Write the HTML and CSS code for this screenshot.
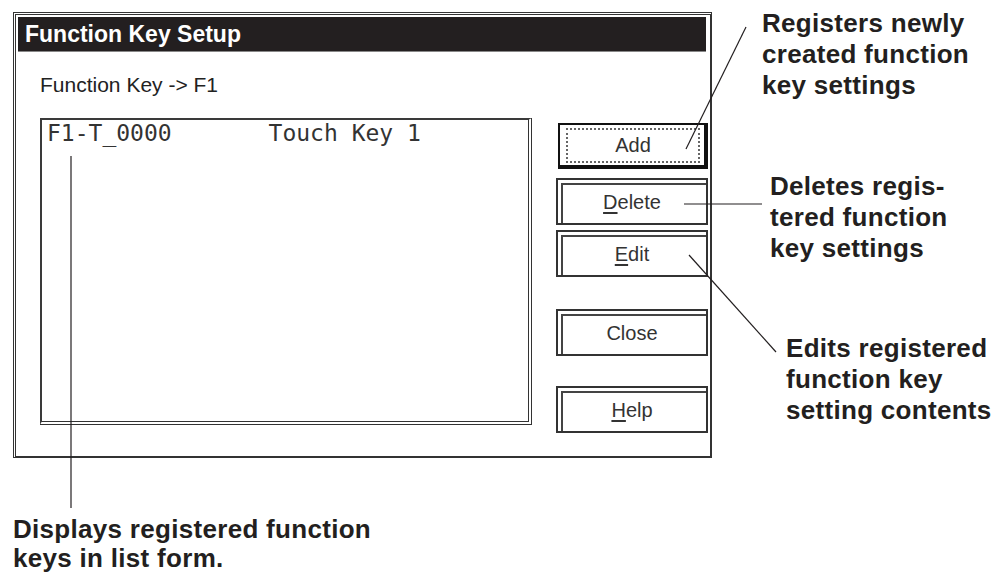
FILE: index.html
```html
<!DOCTYPE html>
<html>
<head lang="en">
    <meta charset="UTF-8">
    <title>Function Key Setup</title>
    <link rel="stylesheet" href="styles.css">
</head>
<body>
<div id="figure">
    <div id="top">
        <div class="dialog">
            <div class="titlebar">Function Key Setup</div>
            <div class="dialog-body">
                <div class="list-pane">
                    <div class="label">Function Key -&gt; F1</div>
                    <div class="list">
                        <div class="row">F1-T_0000       Touch Key 1</div>
                    </div>
                </div>
                <div class="buttons">
                    <div class="btn btn-default"><span class="focus">Add</span></div>
                    <div class="btn btn-delete"><u>D</u>elete</div>
                    <div class="btn btn-edit"><u>E</u>dit</div>
                    <div class="btn btn-close">Close</div>
                    <div class="btn btn-help"><u>H</u>elp</div>
                </div>
            </div>
        </div>
        <div class="notes">
            <p class="note note-add">Registers newly<br>created function<br>key settings</p>
            <p class="note note-delete">Deletes regis-<br>tered function<br>key settings</p>
            <p class="note note-edit">Edits registered<br>function key<br>setting contents</p>
        </div>
    </div>
    <p class="note note-list">Displays registered function<br>keys in list form.</p>

    <svg class="leaders" width="1002" height="573" viewBox="0 0 1002 573">
        <line x1="686" y1="149" x2="746" y2="27"/>
        <line x1="684" y1="204" x2="762" y2="204"/>
        <line x1="689" y1="255" x2="776" y2="352"/>
        <line x1="71" y1="156" x2="71" y2="508"/>
    </svg>
</div>
</body>
</html>
```

FILE: styles.css
```css
*{
    margin: 0;
    padding: 0;
    box-sizing: border-box;
}
body{
    background: #fff;
    font-family: "Liberation Sans", Arial, sans-serif;
    color: #231f20;
}
#figure{
    position: relative;
    width: 1002px;
    height: 573px;
}
#top{
    display: flex;
}

/* dialog */
.dialog{
    width: 699px;
    height: 446px;
    margin: 12px 0 0 13px;
    border-style: double solid solid double;
    border-width: 3px 2px 2px 3px;
    border-color: #333;
}
.titlebar{
    margin: 2px 4px 0 2px;
    height: 35px;
    line-height: 35px;
    padding-left: 7px;
    background: #231f20;
    color: #fff;
    font-weight: bold;
    font-size: 23px;
    border-bottom: 1px solid #888;
}
.dialog-body{
    display: flex;
    padding: 21px 2px 0 24px;
}
.list-pane{
    width: 492px;
}
.label{
    font-size: 21px;
    line-height: 24px;
    color: #222;
}
.list{
    margin-top: 21px;
    height: 307px;
    border-top: 2px solid #3a3a3a;
    border-left: 2px solid #3a3a3a;
    border-right: 4px double #333;
    border-bottom: 4px double #333;
    padding-left: 5px;
}
.list .row{
    font-family: "DejaVu Sans Mono", "Liberation Mono", monospace;
    font-size: 23px;
    line-height: 27px;
    white-space: pre;
    color: #333;
}

/* buttons */
.buttons{
    width: 152px;
    margin-left: 24px;
    margin-top: 50px;
    display: flex;
    flex-direction: column;
}
.btn{
    height: 47px;
    border: 2px solid #333;
    box-shadow: inset 3px 3px 0 #fff, inset 5px 5px 0 #444;
    display: flex;
    align-items: center;
    justify-content: center;
    font-size: 20px;
    color: #333;
    padding-top: 2px;
}
.btn u{
    text-underline-offset: 3px;
}
.btn-default{
    height: 46px;
    margin-left: 2px;
    border-width: 2px 4px 4px 2px;
    border-color: #111;
    box-shadow: none;
    padding: 3px 4px 2px 6px;
}
.btn-default .focus{
    flex: 1;
    align-self: stretch;
    display: flex;
    align-items: center;
    justify-content: center;
    border: 2px dotted #666;
}
.btn-delete{ margin-top: 9px; }
.btn-edit{ margin-top: 5px; }
.btn-close{ margin-top: 32px; }
.btn-help{ margin-top: 30px; }

/* callouts */
.notes{
    margin-left: 50px;
    display: flex;
    flex-direction: column;
}
.note{
    font-weight: bold;
    font-size: 26px;
    line-height: 31px;
    letter-spacing: 0.3px;
    white-space: nowrap;
    color: #231f20;
}
.note-add{ margin-top: 8px; }
.note-delete{ margin-top: 70px; margin-left: 8px; }
.note-edit{ margin-top: 69px; margin-left: 24px; }
.note-list{
    margin: 57px 0 0 13px;
    line-height: 29px;
}

.leaders{
    position: absolute;
    left: 0;
    top: 0;
    pointer-events: none;
}
.leaders line{
    stroke: #231f20;
    stroke-width: 1.2;
}
```
